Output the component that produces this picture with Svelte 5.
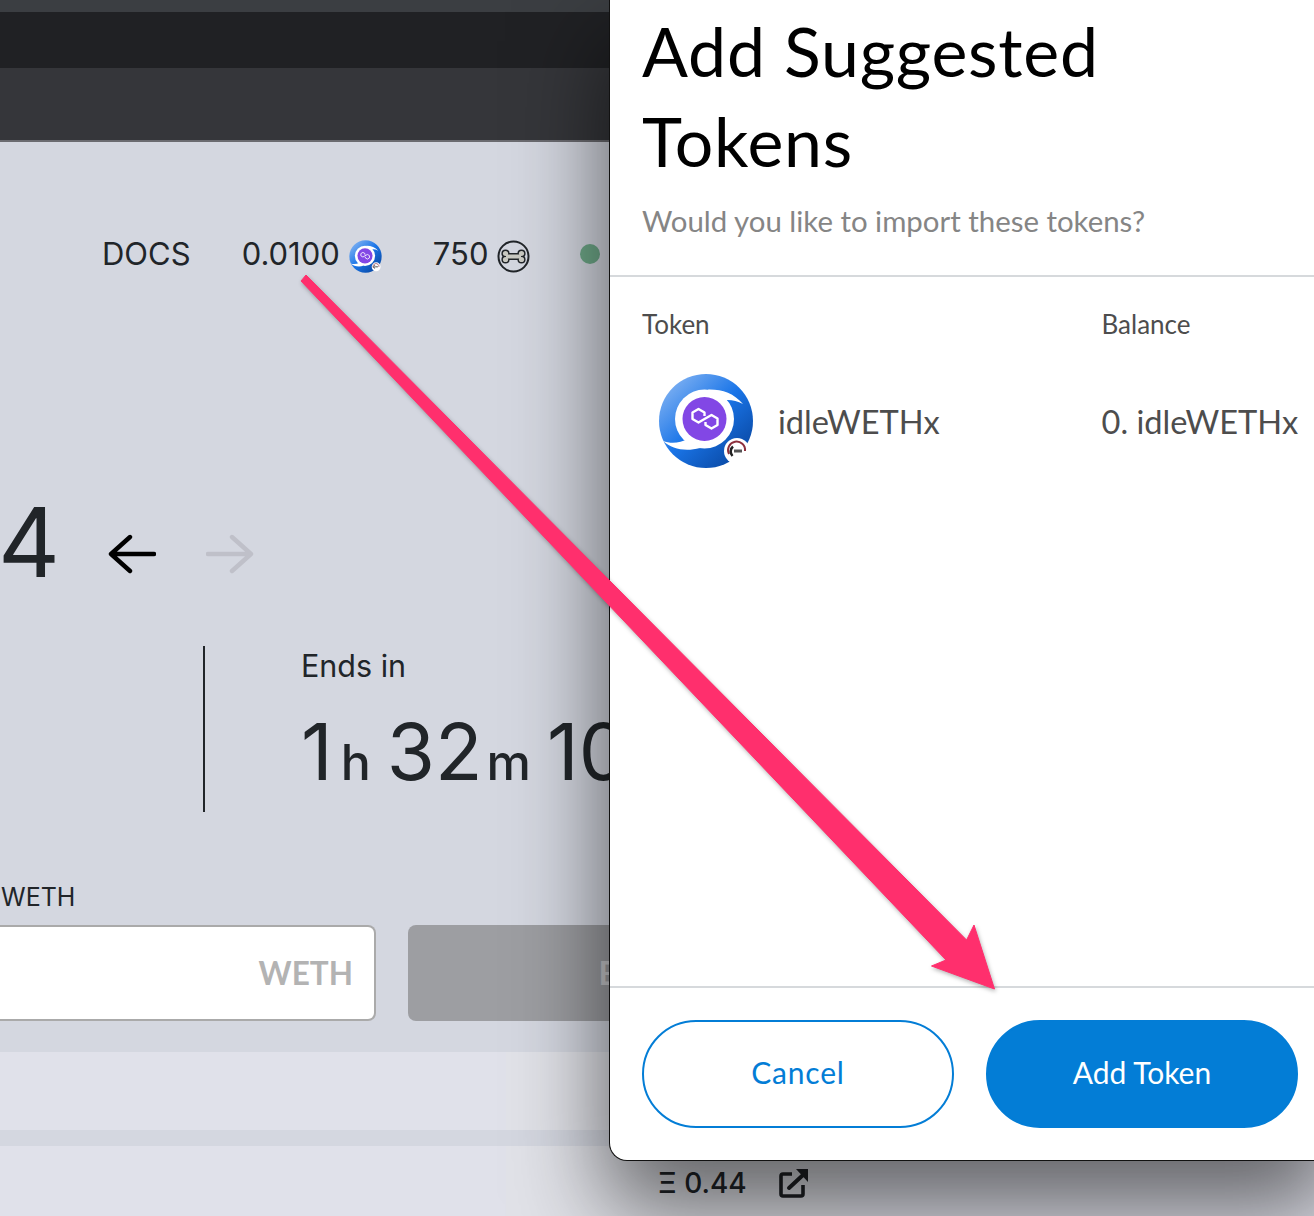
<script lang="ts">
  const bands = [78, 16, 70];
</script>

{#snippet tokenLogo(size: number)}
  <svg class="logo" width={size} height={size} viewBox="0 0 96 96" aria-hidden="true">
    <defs>
      <linearGradient id="swirl" x1="0.1" y1="0.1" x2="0.85" y2="0.9">
        <stop offset="0" stop-color="#7db0f2" />
        <stop offset="0.5" stop-color="#1a75e8" />
        <stop offset="1" stop-color="#0a4aa6" />
      </linearGradient>
    </defs>
    <circle cx="48" cy="48" r="47" fill="url(#swirl)" />
    <circle cx="46.5" cy="46" r="29.5" fill="#fff" />
    <path d="M50 16.5C63 16 76 20 85 31C77 26.5 69 26 61 28Z" fill="#fff" />
    <path d="M5 68C14 76 27 79 42 75L30 66C22 70 13 71 5 68Z" fill="#fff" />
    <circle cx="46.5" cy="46" r="22" fill="#8247e5" />
    <path
      d="M46.5 43V39.5L40.5 36L34.5 39.5V46L40.5 49.5L46.5 46L53.5 42L59.5 45.5V52L53.5 55.5L47.5 52V49"
      fill="none"
      stroke="#fff"
      stroke-width="2.4"
      stroke-linejoin="round"
    />
    <circle cx="79" cy="78" r="13" fill="#fff" />
    <path d="M71 81A8.5 8.5 0 1 1 87 78" fill="none" stroke="#8c2f3c" stroke-width="2" />
    <path d="M74.5 83A6.5 6.5 0 0 1 75 73.5" fill="none" stroke="#222" stroke-width="2.5" />
    <rect x="76" y="76.5" width="8" height="3" fill="#555" />
  </svg>
{/snippet}

<div class="page">
  <div class="strip"></div>
  <div class="tabs"></div>
  <div class="toolbar"></div>

  <main class="app">
    <nav class="nav">
      <span>DOCS</span>
      <span class="stat">0.0100 {@render tokenLogo(33)}</span>
      <span class="stat bones">
        750
        <svg width="33" height="33" viewBox="0 0 33 33" aria-hidden="true">
          <circle cx="16.5" cy="16.5" r="15" fill="none" stroke="#212529" stroke-width="2" />
          <g fill="#212529" stroke="#212529" stroke-width="3">
            <rect x="10" y="14.5" width="13" height="4" />
            <circle cx="8.5" cy="13.5" r="2.6" />
            <circle cx="8.5" cy="19.5" r="2.6" />
            <circle cx="24.5" cy="13.5" r="2.6" />
            <circle cx="24.5" cy="19.5" r="2.6" />
          </g>
          <g fill="#c9c9c2">
            <rect x="9" y="14.5" width="15" height="4" />
            <circle cx="8.5" cy="13.5" r="2.6" />
            <circle cx="8.5" cy="19.5" r="2.6" />
            <circle cx="24.5" cy="13.5" r="2.6" />
            <circle cx="24.5" cy="19.5" r="2.6" />
          </g>
        </svg>
      </span>
      <span class="dot"></span>
    </nav>

    <div class="pager">
      <span class="round">4</span>
      <svg width="48" height="40" viewBox="0 0 48 40" aria-hidden="true">
        <path d="M46 20H4M22 3L3 20L22 37" fill="none" stroke="#000" stroke-width="4.4" stroke-linecap="round" stroke-linejoin="round" />
      </svg>
      <svg width="48" height="40" viewBox="0 0 48 40" aria-hidden="true">
        <path d="M2 20H44M26 3L45 20L26 37" fill="none" stroke="#bfc0c9" stroke-width="4.4" stroke-linecap="round" stroke-linejoin="round" />
      </svg>
    </div>

    <div class="timer">
      <div class="rule"></div>
      <div>
        <div class="ends">Ends in</div>
        <div class="clock">1<small>h</small>32<small class="minutes">m</small>10</div>
      </div>
    </div>

    <div class="bid-label">WETH</div>
    <div class="bid">
      <div class="field">WETH</div>
      <div class="bid-button">BID</div>
    </div>
  </main>

  {#each bands as height, i}
    <div class="band" class:gap={i === 1} style="height: {height}px">
      {#if i !== 1}
        <div class="cell">
          {#if i === 2}
            <span class="price">Ξ 0.44</span>
            <svg width="30" height="29" viewBox="0 0 30 29" aria-hidden="true">
              <path d="M13 5H4a2 2 0 0 0-2 2v18a2 2 0 0 0 2 2h18a2 2 0 0 0 2-2v-9" fill="none" stroke="#1f2125" stroke-width="3.6" />
              <path d="M10 19L24 6" stroke="#1f2125" stroke-width="4" stroke-linecap="round" />
              <path d="M17 0H29V13Z" fill="#1f2125" />
            </svg>
          {/if}
        </div>
      {/if}
    </div>
  {/each}

  <section class="dialog">
    <header class="head">
      <h1>Add Suggested Tokens</h1>
      <p>Would you like to import these tokens?</p>
    </header>
    <div class="body">
      <div class="labels">
        <span>Token</span>
        <span>Balance</span>
      </div>
      <div class="row">
        <div class="token">
          {@render tokenLogo(96)}
          <span>idleWETHx</span>
        </div>
        <span>0. idleWETHx</span>
      </div>
    </div>
    <footer class="foot">
      <button class="btn cancel">Cancel</button>
      <button class="btn add">Add Token</button>
    </footer>
  </section>

  <svg class="arrow" width="1314" height="1216" viewBox="0 0 1314 1216" aria-hidden="true">
    <path
      d="M301 281L306 275L966.6 940L974 925L994.5 989L931.5 966L946 960Z"
      fill="#ff2f6d"
      stroke="#ff2f6d"
      stroke-width="1"
      stroke-linejoin="round"
    />
  </svg>
</div>

<style>
  :global(body) {
    margin: 0;
    background: #e0e1ea;
  }

  .page {
    position: relative;
    width: 1314px;
    height: 1216px;
    overflow: hidden;
    font-family: Inter, "Liberation Sans", sans-serif;
    color: #212529;
  }

  .strip {
    height: 12px;
    background: #3b3e42;
  }

  .tabs {
    height: 56px;
    background: #202124;
  }

  .toolbar {
    height: 72px;
    background: #35363a;
    border-bottom: 2px solid #6b6b70;
  }

  .app {
    height: 910px;
    background: #d4d7e0;
    overflow: hidden;
  }

  .nav {
    display: flex;
    align-items: center;
    gap: 51px;
    padding: 93px 0 0 102px;
    font-size: 31px;
    height: 36px;
    white-space: nowrap;
  }

  .stat {
    display: flex;
    align-items: center;
    gap: 9px;
  }

  .stat svg {
    margin-top: 6px;
    flex: none;
  }

  .dot {
    flex: none;
    width: 20px;
    height: 20px;
    border-radius: 50%;
    background: #6ea888;
    margin-left: -1px;
    margin-top: 2px;
  }

  .pager {
    display: flex;
    align-items: center;
    margin-top: 231px;
    height: 80px;
  }

  .round {
    font-size: 96px;
    line-height: 80px;
    margin-left: -2px;
    width: 110px;
  }

  .pager svg {
    margin-right: 50px;
    margin-top: 24px;
    flex: none;
  }

  .timer {
    display: flex;
    gap: 96px;
    margin: 64px 0 0 203px;
    height: 166px;
    white-space: nowrap;
  }

  .rule {
    width: 2px;
    background: #212529;
  }

  .ends {
    font-size: 30.5px;
    line-height: 40px;
  }

  .clock {
    display: flex;
    align-items: baseline;
    font-size: 78px;
    line-height: 90px;
    margin-top: 21px;
  }

  .clock small {
    font-size: 50px;
    font-weight: 500;
    margin: 0 16px 0 8px;
  }

  .clock .minutes {
    margin-left: 4px;
  }

  .bid-label {
    margin: 70px 0 0 1px;
    font-size: 25px;
    line-height: 30px;
  }

  .bid {
    display: flex;
    gap: 32px;
    margin-top: 13px;
  }

  .field {
    box-sizing: border-box;
    width: 376px;
    height: 96px;
    padding-right: 21px;
    background: #fff;
    border: 2px solid #aaa;
    border-left: 0;
    border-radius: 0 8px 8px 0;
    text-align: right;
    font: 700 31.5px/92px Lato, sans-serif;
    color: #b3b3b3;
  }

  .bid-button {
    width: 436px;
    flex: none;
    height: 96px;
    border-radius: 8px;
    background: #9d9ea2;
    color: #c9c9cc;
    font: 700 32px/96px Lato, sans-serif;
    text-align: center;
  }

  .band {
    background: #e0e1ea;
  }

  .band.gap {
    background: #d4d7e0;
  }

  .cell {
    display: flex;
    align-items: center;
    gap: 32px;
    box-sizing: border-box;
    width: 334px;
    height: 100%;
    margin-left: 506px;
    padding: 4px 0 0 152px;
    background: #e1e2e8;
  }

  .cell svg {
    flex: none;
  }

  .price {
    font-size: 28px;
    font-weight: 500;
    white-space: nowrap;
  }

  .dialog {
    position: absolute;
    left: 609px;
    top: 0;
    width: 720px;
    height: 1161px;
    box-sizing: border-box;
    display: flex;
    flex-direction: column;
    background: #fff;
    border: 1px solid #111;
    border-width: 0 0 1px 1px;
    border-radius: 0 0 0 18px;
    box-shadow: 0 45px 90px 4px rgba(0, 0, 0, 0.56);
    font-family: Lato, sans-serif;
  }

  .head {
    height: 277px;
    box-sizing: border-box;
    padding: 6px 32px 0;
    border-bottom: 2px solid #d6d9dc;
    flex: none;
  }

  h1 {
    margin: 0;
    width: 500px;
    font-size: 68px;
    line-height: 90px;
    font-weight: 400;
    letter-spacing: 0.8px;
    color: #000;
  }

  .head p {
    margin: 17px 0 0;
    font-size: 29.4px;
    line-height: 36px;
    color: #858585;
  }

  .body {
    flex: 1;
    padding: 32px 0 0 32px;
    color: #4d4d4d;
  }

  .labels,
  .row {
    display: grid;
    grid-template-columns: 459.5px auto;
  }

  .labels {
    font-size: 26px;
    line-height: 30px;
  }

  .row {
    align-items: center;
    margin-top: 34px;
    font-size: 32.6px;
  }

  .token {
    display: flex;
    align-items: center;
    gap: 24px;
    padding-left: 16px;
  }

  .foot {
    display: flex;
    gap: 32px;
    height: 174px;
    box-sizing: border-box;
    padding: 32px 0 0 32px;
    border-top: 2px solid #d6d9dc;
    flex: none;
  }

  .btn {
    box-sizing: border-box;
    width: 312px;
    height: 108px;
    padding-bottom: 5px;
    border-radius: 54px;
    border: 2px solid #037dd6;
    font-family: Lato, sans-serif;
    font-size: 30px;
    cursor: pointer;
  }

  .cancel {
    background: #fff;
    color: #037dd6;
    letter-spacing: 0.8px;
  }

  .add {
    background: #037dd6;
    color: #fff;
  }

  .arrow {
    position: absolute;
    left: 0;
    top: 0;
    filter: drop-shadow(1px 2px 2px rgba(0, 0, 0, 0.3));
    pointer-events: none;
  }
</style>
